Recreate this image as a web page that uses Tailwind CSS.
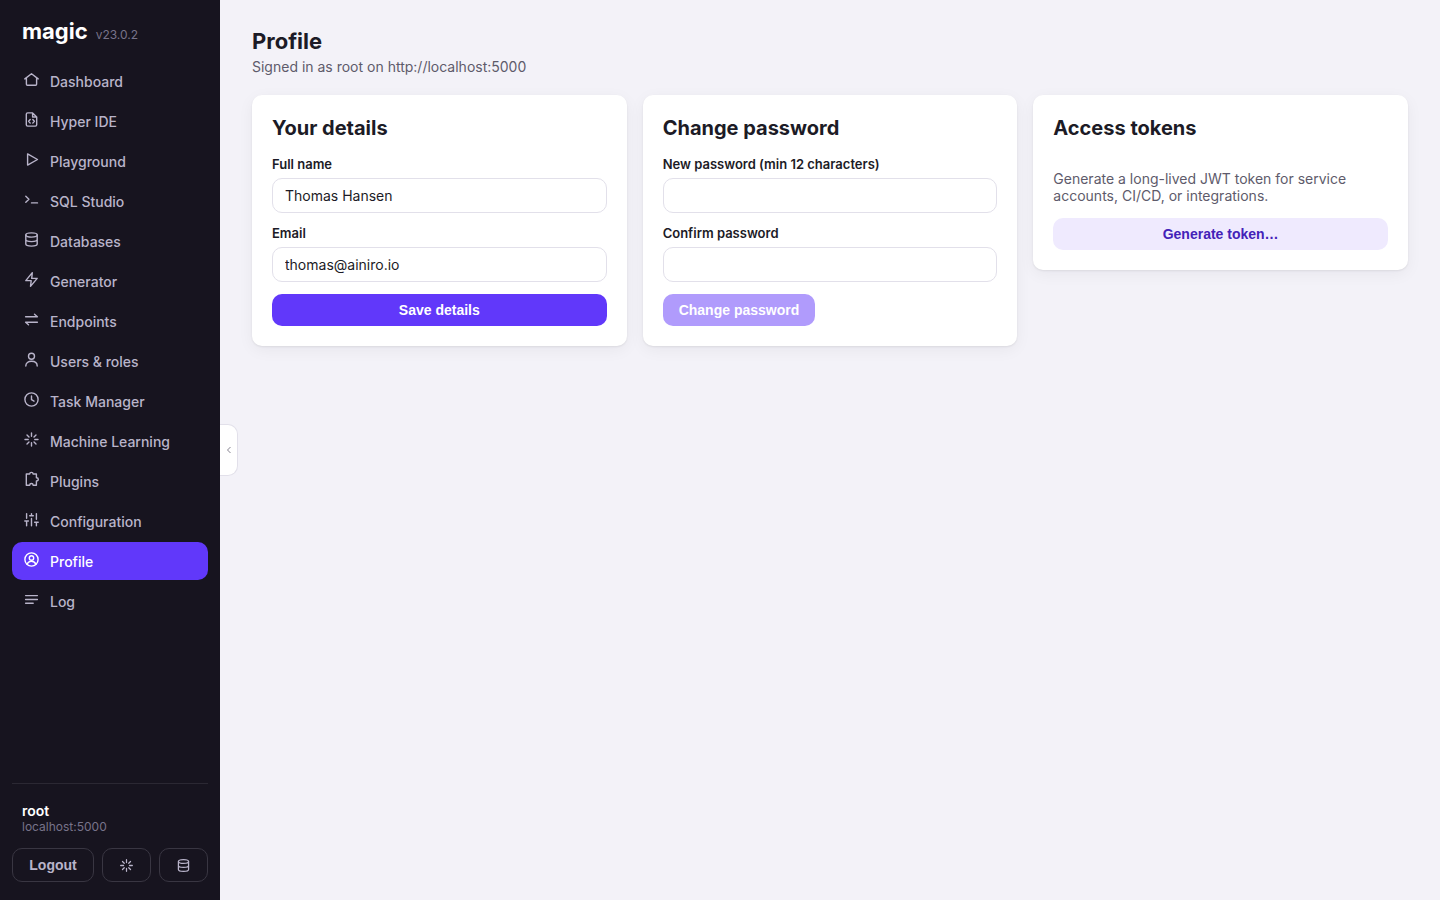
<!DOCTYPE html>
<html lang="en">
<head>
<meta charset="utf-8">
<meta name="viewport" content="width=device-width, initial-scale=1">
<title>Magic - Profile</title>
<script src="https://cdn.jsdelivr.net/npm/@tailwindcss/browser@4"></script>
</head>
<body class="min-h-screen flex bg-[#f3f2f8] font-['Inter','Liberation_Sans',sans-serif] text-sm text-[#1c1b26]">
<svg class="hidden" aria-hidden="true">
  <symbol id="spark" viewBox="0 0 19 19"><path d="M9.5 3v3.2M9.5 12.8V16M3 9.5h3.2M12.8 9.5H16M5 5l2 2M12 12l2 2M14 5l-2 2M7 12l-2 2"/></symbol>
  <symbol id="db" viewBox="0 0 19 19"><ellipse cx="9.5" cy="5" rx="5.7" ry="2.1"/><path d="M3.8 5v9c0 1.2 2.5 2.1 5.7 2.1s5.7-.9 5.7-2.1V5M3.8 9.5c0 1.2 2.5 2.1 5.7 2.1s5.7-.9 5.7-2.1"/></symbol>
</svg>
<aside class="w-[220px] shrink-0 min-h-screen bg-[#17141f] px-3 pt-[18px] pb-[18px] flex flex-col">
  <div class="flex items-baseline gap-2 px-2.5 pb-[18px]">
    <span class="text-[22px] leading-[26px] font-bold text-white">magic</span>
    <span class="text-xs text-[#77738a]">v23.0.2</span>
  </div>
  <nav class="flex flex-col gap-0.5 font-medium text-[#b9b4ca] [&_a]:flex [&_a]:h-[38px] [&_a]:gap-[9px] [&_a]:rounded-[10px] [&_a]:px-2.5 [&_a]:pt-2 [&_a]:leading-6 [&_svg]:size-[19px] [&_svg]:fill-none [&_svg]:stroke-current [&_svg]:[stroke-width:1.4] [&_svg]:[stroke-linecap:round] [&_svg]:[stroke-linejoin:round]">
    <a href="#"><svg viewBox="0 0 19 19"><path d="M2.8 8.9 9.5 3.7l6.7 5.2M4.4 7.8v6.4c0 .6.4 1 1 1h8.2c.6 0 1-.4 1-1V7.8"/></svg>Dashboard</a>
    <a href="#"><svg viewBox="0 0 19 19"><path d="M10.6 2.9H5.7c-.8 0-1.4.6-1.4 1.4v10.4c0 .8.6 1.4 1.4 1.4h7.6c.8 0 1.4-.6 1.4-1.4V7zM10.6 2.9V7h4.1M8.2 9.5l-1.6 1.8 1.6 1.8M10.8 9.5l1.6 1.8-1.6 1.8"/></svg>Hyper IDE</a>
    <a href="#"><svg viewBox="0 0 19 19"><path d="M5.6 3.9v11.2l9.9-5.6z"/></svg>Playground</a>
    <a href="#"><svg viewBox="0 0 19 19"><path d="m3.8 6.3 3.1 3-3.1 3M9.5 12.9h6"/></svg>SQL Studio</a>
    <a href="#"><svg><use href="#db"/></svg>Databases</a>
    <a href="#"><svg viewBox="0 0 19 19"><path d="M10.3 2.6 3.8 10.6h5.4l-.7 5.8 6.7-8h-5.5z"/></svg>Generator</a>
    <a href="#"><svg viewBox="0 0 19 19"><path d="M3.6 6.7h11.8l-2.9-2.4M15.4 12.3H3.6l2.9 2.4"/></svg>Endpoints</a>
    <a href="#"><svg viewBox="0 0 19 19"><circle cx="9.5" cy="6.3" r="3"/><path d="M3.8 16.1c0-3.2 2.4-4.8 5.7-4.8s5.7 1.6 5.7 4.8"/></svg>Users &amp; roles</a>
    <a href="#"><svg viewBox="0 0 19 19"><circle cx="9.5" cy="9.5" r="6.6"/><path d="M9.5 5.9v3.8l2.5 1.5"/></svg>Task Manager</a>
    <a href="#"><svg><use href="#spark"/></svg>Machine Learning</a>
    <a href="#"><svg viewBox="0 0 19 19"><path d="M4.3 4h3.4c0-1 .7-1.6 1.7-1.6s1.7.6 1.7 1.6h3.3v3.7c1.2 0 1.9.6 1.9 1.6s-.7 1.7-1.9 1.7v4.2h-3.3c0-1.1-.6-1.7-1.7-1.7s-1.7.6-1.7 1.7H4.3z"/></svg>Plugins</a>
    <a href="#"><svg viewBox="0 0 19 19"><path d="M4.6 3.6v4.7M4.6 11v4.7M2.8 11h3.6M9.5 3.6v2.2M9.5 8.5v7.2M7.7 5.8h3.6M14.4 3.6v5.6M14.4 12.3v3.4M12.6 12.3h3.6"/></svg>Configuration</a>
    <a href="#" aria-current="page" class="bg-[#6138fa] text-white"><svg viewBox="0 0 19 19"><circle cx="9.5" cy="9.5" r="6.6"/><circle cx="9.5" cy="8" r="2.2"/><path d="M5.2 14.4c.6-2.1 2.2-3.2 4.3-3.2s3.7 1.1 4.3 3.2"/></svg>Profile</a>
    <a href="#"><svg viewBox="0 0 19 19"><path d="M3.6 5.6h11.8M3.6 9.5h11.8M3.6 13.2h7.6"/></svg>Log</a>
  </nav>
  <div class="mt-auto border-t border-[#2b2833] pt-[18px]">
    <div class="px-2.5">
      <div class="leading-[18px] font-semibold text-white">root</div>
      <div class="text-xs leading-[14px] text-[#77738a]">localhost:5000</div>
    </div>
    <div class="mt-3.5 flex gap-2 [&_button]:h-[34px] [&_button]:rounded-[10px] [&_button]:border [&_button]:border-[#393642] [&_button]:text-[#b9b4ca]">
      <button class="w-[82px] font-['Liberation_Sans',sans-serif] font-bold">Logout</button>
      <button aria-label="Machine Learning" class="flex-1 flex items-center justify-center"><svg class="size-[17px] fill-none stroke-current [stroke-width:1.4] [stroke-linecap:round]"><use href="#spark"/></svg></button>
      <button aria-label="Databases" class="flex-1 flex items-center justify-center"><svg class="size-[17px] fill-none stroke-current [stroke-width:1.4]"><use href="#db"/></svg></button>
    </div>
  </div>
</aside>
<div class="relative flex-1 min-w-0">
  <button aria-label="Collapse sidebar" class="absolute left-0 top-1/2 -translate-y-1/2 h-[52px] w-[18px] rounded-r-[10px] border border-l-0 border-[#e2e0ea] bg-white text-[#85828f] flex items-center justify-center"><svg class="size-2 fill-none stroke-current" viewBox="0 0 8 8"><path d="M5.5 1 2.5 4l3 3"/></svg></button>
  <main class="px-8 pt-7">
    <h1 class="text-[22px] leading-[26px] font-bold">Profile</h1>
    <p class="mt-1 leading-[18px] text-[#5e5b6b]">Signed in as root on http://localhost:5000</p>
    <div class="mt-[19px] grid grid-cols-3 items-start gap-4 [&_form]:flex [&_form]:flex-col [&_form]:gap-3 [&_form]:rounded-[10px] [&_form]:bg-white [&_form]:p-5 [&_form]:shadow-[0_1px_2px_#17141f14,0_4px_16px_#17141f0d] [&_h2]:text-xl [&_h2]:leading-[26px] [&_h2]:font-bold [&_label]:flex [&_label]:flex-col [&_label]:gap-1.5 [&_label]:text-[13px] [&_label]:leading-4 [&_label]:font-semibold [&_input]:h-[35px] [&_input]:w-full [&_input]:rounded-[10px] [&_input]:border [&_input]:border-[#e2e0ea] [&_input]:px-3 [&_input]:text-sm [&_input]:font-normal [&_button]:h-8 [&_button]:rounded-[10px] [&_button]:px-4 [&_button]:font-['Liberation_Sans',sans-serif] [&_button]:font-bold">
      <form>
        <h2 class="mb-[3px]">Your details</h2>
        <label>Full name<input type="text" value="Thomas Hansen"></label>
        <label>Email<input type="email" value="thomas@ainiro.io"></label>
        <button type="button" class="bg-[#6138fa] text-white">Save details</button>
      </form>
      <form>
        <h2 class="mb-[3px]">Change password</h2>
        <label>New password (min 12 characters)<input type="password"></label>
        <label>Confirm password<input type="password"></label>
        <button type="button" disabled class="self-start bg-[#b09bfc] text-white">Change password</button>
      </form>
      <form>
        <h2 class="mb-[3px]">Access tokens</h2>
        <p class="mt-3.5 mb-0.5 leading-[17px] text-[#5e5b6b]">Generate a long-lived JWT token for service accounts, CI/CD, or integrations.</p>
        <button type="button" class="bg-[#efeafe] text-[#4322b8]">Generate token…</button>
      </form>
    </div>
  </main>
</div>
</body>
</html>
